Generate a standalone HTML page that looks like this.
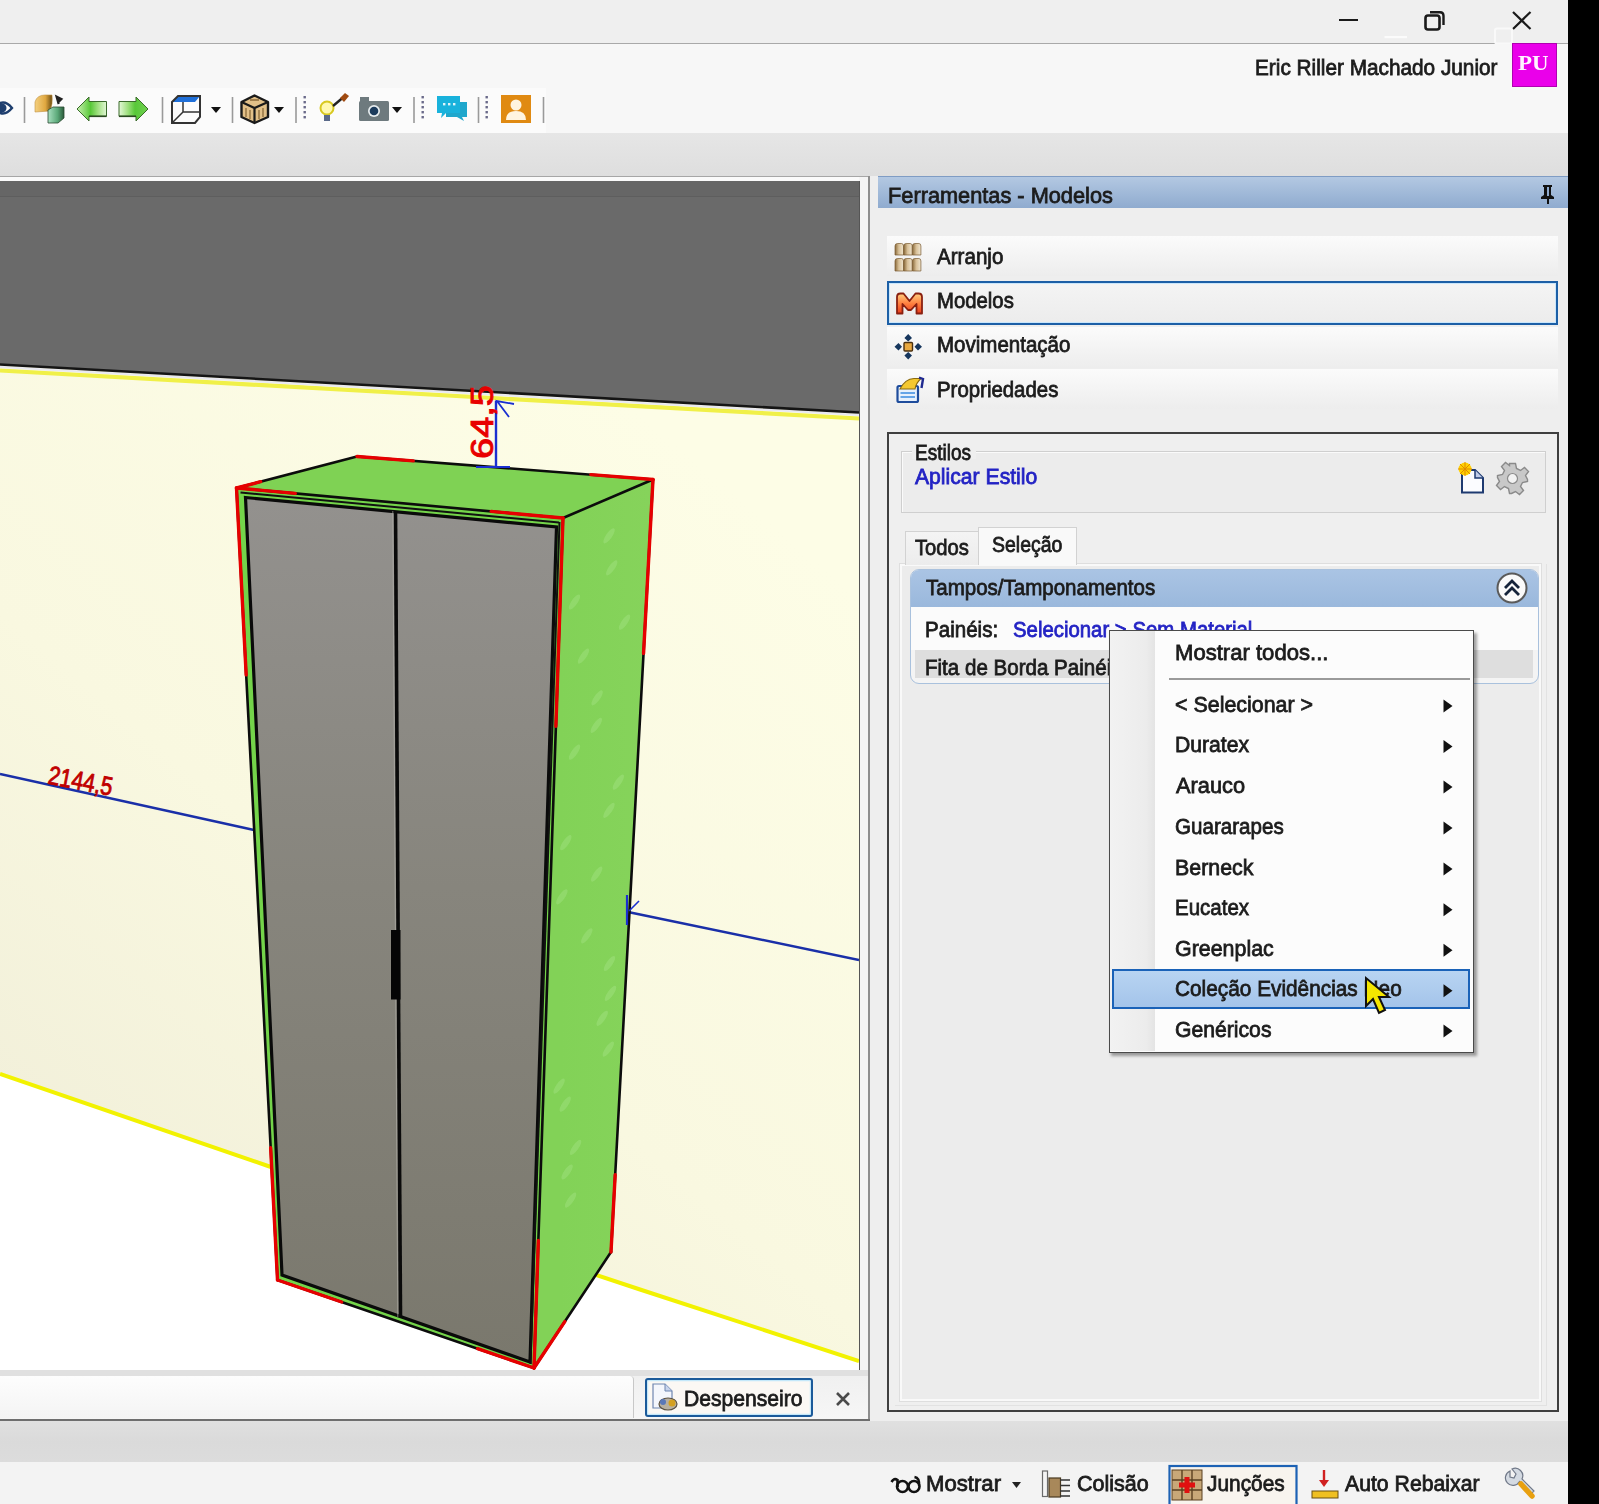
<!DOCTYPE html><html><head><meta charset="utf-8"><title>Promob</title><style>
*{margin:0;padding:0;box-sizing:border-box}
html,body{width:1599px;height:1504px;overflow:hidden;background:#f0f0f0;position:relative;font-family:"Liberation Sans",sans-serif}
.a{position:absolute}
.t{position:absolute;white-space:nowrap;line-height:1;transform-origin:0 0;font-family:"Liberation Sans",sans-serif;-webkit-text-stroke:0.8px currentColor}
</style></head><body>
<div class="a" style="left:0;top:0;width:1568px;height:43px;background:#efefef"></div>
<div class="a" style="left:0;top:43px;width:1568px;height:1px;background:#a9a9a9"></div>
<div class="a" style="left:0;top:44px;width:1568px;height:89px;background:#f7f7f7"></div>
<div class="a" style="left:0;top:88px;width:546px;height:45px;background:#fbfbfb"></div>
<svg class="a" style="left:1330px;top:5px" width="210" height="39" viewBox="1330 5 210 39">
<line x1="1339" y1="20" x2="1358" y2="20" stroke="#1a1a1a" stroke-width="2"/>
<rect x="1425.5" y="15.5" width="14" height="14" rx="2.5" fill="none" stroke="#1a1a1a" stroke-width="2.6"/>
<path d="M1430,12.3 L1440,12.3 Q1443.5,12.3 1443.5,15.8 L1443.5,25" fill="none" stroke="#1a1a1a" stroke-width="2.4"/>
<path d="M1513,12 L1530.5,29 M1530.5,12 L1513,29" stroke="#1a1a1a" stroke-width="2.2"/>
<rect x="1384.5" y="36" width="22.5" height="2.2" fill="#fbfbfb"/>
<rect x="1495" y="28.5" width="17" height="15" rx="2" fill="none" stroke="#f9f9f9" stroke-width="2"/>
</svg>
<div class="a" style="left:1512px;top:43px;width:45px;height:44px;background:#ea00ea;border:1px solid #b000b0"></div>
<div class="t" style="left:1518px;top:52.6px;font-family:'Liberation Serif',serif;font-weight:bold;font-size:20.5px;color:#fff5ff;-webkit-text-stroke:0;transform:scaleX(1.12)">PU</div>
<svg width="560" height="50" viewBox="0 85 560 50" style="position:absolute;left:0;top:85px">
<line x1="24.5" y1="97" x2="24.5" y2="123" stroke="#9a9a9a" stroke-width="1.6"/>
<line x1="162.5" y1="97" x2="162.5" y2="123" stroke="#9a9a9a" stroke-width="1.6"/>
<line x1="232.5" y1="97" x2="232.5" y2="123" stroke="#9a9a9a" stroke-width="1.6"/>
<line x1="296" y1="97" x2="296" y2="123" stroke="#9a9a9a" stroke-width="1.6"/>
<line x1="414" y1="97" x2="414" y2="123" stroke="#9a9a9a" stroke-width="1.6"/>
<line x1="478.5" y1="97" x2="478.5" y2="123" stroke="#9a9a9a" stroke-width="1.6"/>
<line x1="543.5" y1="97" x2="543.5" y2="123" stroke="#9a9a9a" stroke-width="1.6"/>
<rect x="303.5" y="96" width="2.4" height="2.4" fill="#6a6a8a"/>
<rect x="303.5" y="101" width="2.4" height="2.4" fill="#6a6a8a"/>
<rect x="303.5" y="106" width="2.4" height="2.4" fill="#6a6a8a"/>
<rect x="303.5" y="111" width="2.4" height="2.4" fill="#6a6a8a"/>
<rect x="303.5" y="116" width="2.4" height="2.4" fill="#6a6a8a"/>
<rect x="421.5" y="96" width="2.4" height="2.4" fill="#6a6a8a"/>
<rect x="421.5" y="101" width="2.4" height="2.4" fill="#6a6a8a"/>
<rect x="421.5" y="106" width="2.4" height="2.4" fill="#6a6a8a"/>
<rect x="421.5" y="111" width="2.4" height="2.4" fill="#6a6a8a"/>
<rect x="421.5" y="116" width="2.4" height="2.4" fill="#6a6a8a"/>
<rect x="485.5" y="96" width="2.4" height="2.4" fill="#6a6a8a"/>
<rect x="485.5" y="101" width="2.4" height="2.4" fill="#6a6a8a"/>
<rect x="485.5" y="106" width="2.4" height="2.4" fill="#6a6a8a"/>
<rect x="485.5" y="111" width="2.4" height="2.4" fill="#6a6a8a"/>
<rect x="485.5" y="116" width="2.4" height="2.4" fill="#6a6a8a"/>
<path d="M-6,108 Q3,97 12,108 Q3,119 -6,108 Z" fill="#ffffff" stroke="#1e3e6e" stroke-width="2.4"/>
<circle cx="2" cy="108" r="4.5" fill="#1e3e6e"/>
<defs><linearGradient id="lag" x1="77" y1="0" x2="107" y2="0" gradientUnits="userSpaceOnUse"><stop offset="0" stop-color="#c8f0b0"/><stop offset="0.45" stop-color="#58c838"/><stop offset="0.7" stop-color="#a0e080"/><stop offset="1" stop-color="#e4f8d8"/></linearGradient><linearGradient id="rag" x1="119" y1="0" x2="148" y2="0" gradientUnits="userSpaceOnUse"><stop offset="0" stop-color="#e4f8d8"/><stop offset="0.3" stop-color="#a0e080"/><stop offset="0.55" stop-color="#58c838"/><stop offset="1" stop-color="#70d050"/></linearGradient><linearGradient id="obg" x1="0" y1="0" x2="1" y2="0"><stop offset="0" stop-color="#f4d080"/><stop offset="0.6" stop-color="#e0a840"/><stop offset="1" stop-color="#6a4a10"/></linearGradient><linearGradient id="gbg" x1="0" y1="0" x2="1" y2="0"><stop offset="0" stop-color="#a8e0c0"/><stop offset="0.6" stop-color="#5aa878"/><stop offset="1" stop-color="#2a5a3a"/></linearGradient></defs>
<path d="M35,102 Q37,95 45,95 L52,95 Q53,104 50,111 L35,112 Z" fill="url(#obg)" stroke="#c09040" stroke-width="0.6"/>
<path d="M48,110 L53,107 L64,107 L64,118 L58,123 L48,123 Z" fill="url(#gbg)" stroke="#2a4a30" stroke-width="0.8"/>
<path d="M56,96 L62,99 L58,103 Z M57,98 L59,104" fill="#222" stroke="#222" stroke-width="1.5"/>
<path d="M77,109 L89,97 L89,101.5 L106.5,101.5 L106.5,116.3 L89,116.3 L89,121 Z" fill="url(#lag)" stroke="#3a6a2a" stroke-width="1"/>
<path d="M89,116.3 L106.5,116.3" stroke="#2a4a20" stroke-width="1.6"/>
<path d="M148,109 L136,97 L136,101.5 L119,101.5 L119,116.3 L136,116.3 L136,121 Z" fill="url(#rag)" stroke="#3a6a2a" stroke-width="1"/>
<path d="M119,116.3 L136,116.3" stroke="#2a4a20" stroke-width="1.6"/>
<path d="M178,96 L200,96 L195,102 L172,102 Z" fill="#1f6fd8"/>
<path d="M172,102 L178,96 L200,96 L200,117 L195,123 L172,123 Z" fill="none" stroke="#333" stroke-width="2"/>
<path d="M183,102 L183,112 L200,112 M183,112 L173,122" fill="none" stroke="#333" stroke-width="1.5"/>
<path d="M211,107 L221,107 L216,113 Z" fill="#111"/>
<path d="M274,107 L284,107 L279,113 Z" fill="#111"/>
<path d="M392,107 L402,107 L397,113 Z" fill="#111"/>
<path d="M241.5,102 L254.5,95.5 L268,102 L268,117 L254.5,123 L241.5,117 Z" fill="#e2c088" stroke="#1a1a1a" stroke-width="2.4" stroke-linejoin="round"/>
<path d="M241.5,102 L254.5,108 L268,102 M254.5,108 L254.5,123" fill="none" stroke="#1a1a1a" stroke-width="2.2"/>
<path d="M246,108 L246,117 M250,110 L250,119 M259,110 L259,119 M263,108 L263,117 M250,100 L259,100" stroke="#8a6a3a" stroke-width="1.3"/>
<circle cx="327" cy="108" r="6.5" fill="#fff8b0" stroke="#d8c820" stroke-width="2"/>
<rect x="324" y="115" width="6" height="6" fill="#5a6a8a"/>
<path d="M333,106 L346,95" stroke="#222" stroke-width="2.4"/><path d="M340,98 L345,93 L349,96 L344,102 Z" fill="#a04a10"/>
<rect x="359" y="101" width="30" height="20" rx="1.5" fill="#6e7a7e"/><rect x="360" y="97" width="9" height="5" fill="#6e7a7e"/>
<circle cx="374" cy="111" r="6" fill="#e8eef0"/><circle cx="374" cy="111" r="4.3" fill="#1b3b5c"/>
<path d="M446,102 L467,102 L467,117 L462,117 L464,121 L457,117 L446,117 Z" fill="#1fa7cc"/>
<path d="M437,96 L460,96 L460,113 L446,113 L441,118 L442,113 L437,113 Z" fill="#19b2dc"/>
<rect x="443" y="103" width="2.4" height="2.4" fill="#e0f4fa"/>
<rect x="448" y="103" width="2.4" height="2.4" fill="#e0f4fa"/>
<rect x="453" y="103" width="2.4" height="2.4" fill="#e0f4fa"/>
<rect x="501" y="95" width="30" height="28" fill="#e08a12"/>
<circle cx="516" cy="105" r="5.5" fill="#fff4e0"/><path d="M506,120 Q506,111 516,111 Q526,111 526,120 Z" fill="#fff4e0"/>
</svg>
<div class="a" style="left:0;top:133px;width:1568px;height:43px;background:linear-gradient(#e6e6e6,#dedede)"></div>
<div class="a" style="left:0;top:176px;width:870px;height:1px;background:#a6a6a6"></div>
<div class="a" style="left:0;top:177px;width:869px;height:4px;background:#fafafa"></div>
<div class="a" style="left:859px;top:177px;width:10px;height:1243px;background:#f4f4f4"></div>
<div class="a" style="left:868px;top:176px;width:2px;height:1244px;background:#8e8e8e"></div>
<svg width="859" height="1189" viewBox="0 181 859 1189" style="position:absolute;left:0;top:181px;display:block">
<defs>
<linearGradient id="wallg" x1="600" y1="380" x2="0" y2="1100" gradientUnits="userSpaceOnUse"><stop offset="0" stop-color="#fdfde6"/><stop offset="0.6" stop-color="#f9f8e0"/><stop offset="1" stop-color="#f2f0da"/></linearGradient>
<linearGradient id="doorg" x1="0" y1="500" x2="0" y2="1360" gradientUnits="userSpaceOnUse"><stop offset="0" stop-color="#93918e"/><stop offset="0.45" stop-color="#87857d"/><stop offset="1" stop-color="#7a786d"/></linearGradient>
<linearGradient id="rightg" x1="560" y1="0" x2="650" y2="0" gradientUnits="userSpaceOnUse"><stop offset="0" stop-color="#82d257"/><stop offset="1" stop-color="#86d35b"/></linearGradient>
</defs>
<rect x="0" y="181" width="859" height="1189" fill="#6a6a6a"/>
<rect x="0" y="181" width="859" height="16" fill="#666666"/><rect x="0" y="196" width="859" height="1" fill="#5e5e5e"/>
<polygon points="0,364 859,412 859,1361 640,1289.5 268,1166 0,1074" fill="url(#wallg)"/>
<polygon points="0,1074 268,1166 640,1289.5 859,1361 859,1370 0,1370" fill="#ffffff"/>
<line x1="0" y1="370.5" x2="859" y2="418.5" stroke="#f0f048" stroke-width="4.2"/>
<line x1="0" y1="367" x2="859" y2="415" stroke="#e8e8f0" stroke-width="2"/>
<line x1="0" y1="364.5" x2="859" y2="412.5" stroke="#151515" stroke-width="2.6"/>
<polyline points="0,1074 268,1166 640,1289.5 859,1361" fill="none" stroke="#f2f200" stroke-width="4"/>
<line x1="0" y1="774" x2="254" y2="830" stroke="#1a2fa8" stroke-width="2.4"/>
<line x1="628" y1="912" x2="859" y2="960" stroke="#1a2fa8" stroke-width="2.4"/>
<polygon points="563,518 653,479.5 611,1252 534,1368" fill="url(#rightg)"/>
<polygon points="236.5,488 357,456.5 653,479.5 563,518" fill="#7fd254"/>
<ellipse cx="609.1" cy="535.8" rx="3" ry="9" transform="rotate(35 609.1 535.8)" fill="#b4eb98" opacity="0.3"/>
<ellipse cx="611.7" cy="567.9" rx="3" ry="9" transform="rotate(35 611.7 567.9)" fill="#b4eb98" opacity="0.3"/>
<ellipse cx="574.5" cy="602.0" rx="3" ry="9" transform="rotate(35 574.5 602.0)" fill="#b4eb98" opacity="0.3"/>
<ellipse cx="624.5" cy="622.2" rx="3" ry="9" transform="rotate(35 624.5 622.2)" fill="#b4eb98" opacity="0.3"/>
<ellipse cx="583.5" cy="656.1" rx="3" ry="9" transform="rotate(35 583.5 656.1)" fill="#b4eb98" opacity="0.3"/>
<ellipse cx="597.1" cy="697.9" rx="3" ry="9" transform="rotate(35 597.1 697.9)" fill="#b4eb98" opacity="0.3"/>
<ellipse cx="596.3" cy="725.4" rx="3" ry="9" transform="rotate(35 596.3 725.4)" fill="#b4eb98" opacity="0.3"/>
<ellipse cx="574.5" cy="752.2" rx="3" ry="9" transform="rotate(35 574.5 752.2)" fill="#b4eb98" opacity="0.3"/>
<ellipse cx="618.3" cy="782.2" rx="3" ry="9" transform="rotate(35 618.3 782.2)" fill="#b4eb98" opacity="0.3"/>
<ellipse cx="609.0" cy="810.4" rx="3" ry="9" transform="rotate(35 609.0 810.4)" fill="#b4eb98" opacity="0.3"/>
<ellipse cx="565.8" cy="842.7" rx="3" ry="9" transform="rotate(35 565.8 842.7)" fill="#b4eb98" opacity="0.3"/>
<ellipse cx="596.7" cy="874.1" rx="3" ry="9" transform="rotate(35 596.7 874.1)" fill="#b4eb98" opacity="0.3"/>
<ellipse cx="561.9" cy="896.8" rx="3" ry="9" transform="rotate(35 561.9 896.8)" fill="#b4eb98" opacity="0.3"/>
<ellipse cx="586.8" cy="935.8" rx="3" ry="9" transform="rotate(35 586.8 935.8)" fill="#b4eb98" opacity="0.3"/>
<ellipse cx="609.5" cy="963.5" rx="3" ry="9" transform="rotate(35 609.5 963.5)" fill="#b4eb98" opacity="0.3"/>
<ellipse cx="610.5" cy="993.4" rx="3" ry="9" transform="rotate(35 610.5 993.4)" fill="#b4eb98" opacity="0.3"/>
<ellipse cx="602.2" cy="1018.3" rx="3" ry="9" transform="rotate(35 602.2 1018.3)" fill="#b4eb98" opacity="0.3"/>
<ellipse cx="608.3" cy="1049.1" rx="3" ry="9" transform="rotate(35 608.3 1049.1)" fill="#b4eb98" opacity="0.3"/>
<ellipse cx="559.1" cy="1086.1" rx="3" ry="9" transform="rotate(35 559.1 1086.1)" fill="#b4eb98" opacity="0.3"/>
<ellipse cx="565.2" cy="1104.2" rx="3" ry="9" transform="rotate(35 565.2 1104.2)" fill="#b4eb98" opacity="0.3"/>
<ellipse cx="575.6" cy="1147.4" rx="3" ry="9" transform="rotate(35 575.6 1147.4)" fill="#b4eb98" opacity="0.3"/>
<ellipse cx="567.1" cy="1172.0" rx="3" ry="9" transform="rotate(35 567.1 1172.0)" fill="#b4eb98" opacity="0.3"/>
<ellipse cx="570.6" cy="1200.1" rx="3" ry="9" transform="rotate(35 570.6 1200.1)" fill="#b4eb98" opacity="0.3"/>
<polygon points="236.5,488 563,518 534,1368 277.5,1280" fill="#74d44a"/>
<polygon points="245.5,497.5 556.5,527 530,1362 282,1275" fill="url(#doorg)" stroke="#0a0a0a" stroke-width="3.2" stroke-linejoin="miter"/>
<line x1="240.5" y1="492.5" x2="559" y2="522.5" stroke="#111" stroke-width="2"/>
<line x1="395.5" y1="511" x2="400.5" y2="1317" stroke="#0a0a0a" stroke-width="3.6"/>
<line x1="392.8" y1="511" x2="397.8" y2="1317" stroke="#b8b6b0" stroke-width="1" opacity="0.6"/>
<rect x="391" y="930" width="9.5" height="69.5" fill="#050505"/>
<line x1="559.5" y1="522" x2="530.5" y2="1364" stroke="#111" stroke-width="2"/>
<line x1="236.5" y1="488" x2="357" y2="456.5" stroke="#0c0c0c" stroke-width="2.6" stroke-linecap="round"/>
<line x1="357" y1="456.5" x2="653" y2="479.5" stroke="#0c0c0c" stroke-width="2.6" stroke-linecap="round"/>
<line x1="653" y1="479.5" x2="563" y2="518" stroke="#0c0c0c" stroke-width="2.6" stroke-linecap="round"/>
<line x1="236.5" y1="488" x2="563" y2="518" stroke="#0c0c0c" stroke-width="2.6" stroke-linecap="round"/>
<line x1="563" y1="518" x2="534" y2="1368" stroke="#0c0c0c" stroke-width="2.6" stroke-linecap="round"/>
<line x1="277.5" y1="1280" x2="534" y2="1368" stroke="#0c0c0c" stroke-width="2.6" stroke-linecap="round"/>
<line x1="653" y1="479.5" x2="611" y2="1252" stroke="#0c0c0c" stroke-width="2.6" stroke-linecap="round"/>
<line x1="611" y1="1252" x2="534" y2="1368" stroke="#0c0c0c" stroke-width="2.6" stroke-linecap="round"/>
<line x1="236.5" y1="488" x2="277.5" y2="1280" stroke="#0c0c0c" stroke-width="2.6" stroke-linecap="round"/>
<line x1="236.5" y1="488" x2="246.176" y2="674.912" stroke="#e60000" stroke-width="3.4" stroke-linecap="round"/>
<line x1="270.653" y1="1147.7359999999999" x2="277.5" y2="1280" stroke="#e60000" stroke-width="3.4" stroke-linecap="round"/>
<line x1="236.5" y1="488.0" x2="260.6" y2="481.7" stroke="#e60000" stroke-width="3.4" stroke-linecap="round"/>
<line x1="357" y1="456.5" x2="413.24" y2="460.87" stroke="#e60000" stroke-width="3.4" stroke-linecap="round"/>
<line x1="590.84" y1="474.67" x2="653" y2="479.5" stroke="#e60000" stroke-width="3.4" stroke-linecap="round"/>
<line x1="236.5" y1="488" x2="295.27" y2="493.4" stroke="#e60000" stroke-width="3.4" stroke-linecap="round"/>
<line x1="491.17" y1="511.4" x2="563.0" y2="518" stroke="#e60000" stroke-width="3.4" stroke-linecap="round"/>
<line x1="653" y1="479.5" x2="643.55" y2="653.3125" stroke="#e60000" stroke-width="3.4" stroke-linecap="round"/>
<line x1="615.2" y1="1174.75" x2="611" y2="1252.0" stroke="#e60000" stroke-width="3.4" stroke-linecap="round"/>
<line x1="564.8" y1="1321.6" x2="534" y2="1368" stroke="#e60000" stroke-width="3.4" stroke-linecap="round"/>
<line x1="563" y1="518" x2="555.895" y2="726.25" stroke="#e60000" stroke-width="3.4" stroke-linecap="round"/>
<line x1="538.35" y1="1240.5" x2="534" y2="1368" stroke="#e60000" stroke-width="3.4" stroke-linecap="round"/>
<line x1="277.5" y1="1280" x2="341.625" y2="1302.0" stroke="#e60000" stroke-width="3.4" stroke-linecap="round"/>
<line x1="477.57" y1="1348.64" x2="534.0" y2="1368" stroke="#e60000" stroke-width="3.4" stroke-linecap="round"/>
<line x1="496" y1="401" x2="496" y2="468" stroke="#1a2fd0" stroke-width="2.4"/>
<polyline points="514,404 497,401 509,417" fill="none" stroke="#1a2fd0" stroke-width="1.8"/>
<line x1="476" y1="467" x2="510" y2="467" stroke="#1a2fd0" stroke-width="2"/>
<text x="0" y="0" transform="translate(493,459) rotate(-90)" font-family="Liberation Sans" font-size="31" fill="#e80000" stroke="#e80000" stroke-width="0.9" textLength="74" lengthAdjust="spacingAndGlyphs">64,5</text>
<text x="0" y="0" transform="translate(47,783.5) rotate(10.8)" font-family="Liberation Sans" font-size="26" fill="#c00000" stroke="#c00000" stroke-width="0.9" textLength="65" lengthAdjust="spacingAndGlyphs">2144,5</text>
<line x1="627" y1="895" x2="627" y2="925" stroke="#1a2fd0" stroke-width="2.2"/>
<polyline points="639,901 629,911" fill="none" stroke="#1a2fd0" stroke-width="1.6"/>
</svg>
<div class="a" style="left:858.5px;top:181px;width:1px;height:1189px;background:#555"></div>
<div class="a" style="left:0;top:1370px;width:868px;height:49px;background:linear-gradient(#e0e0e0 0,#e0e0e0 6px,#f0f0f0 6px,#f6f6f6 100%)"></div>
<div class="a" style="left:0;top:1376px;width:634px;height:42px;background:linear-gradient(#fdfdfd,#f4f4f4);border-right:1px solid #c8c8c8;border-radius:0 4px 0 0"></div>
<div class="a" style="left:645px;top:1378px;width:168px;height:39px;border:2.4px solid #1b5a9a;border-radius:3px;background:#fbf8f4;box-shadow:inset 0 0 0 1.2px #c4e8fa"></div>
<div class="a" style="left:0;top:1419px;width:870px;height:2px;background:#6e6e6e"></div>
<svg class="a" style="left:650px;top:1382px" width="30" height="32" viewBox="650 1382 30 32">
<path d="M653,1384 L665,1384 L672,1391 L672,1408 L653,1408 Z" fill="#f4f6fc" stroke="#6f86b0" stroke-width="1.2"/>
<path d="M665,1384 L665,1391 L672,1391" fill="#c8d4ec" stroke="#6f86b0" stroke-width="1"/>
<ellipse cx="668" cy="1404" rx="9" ry="6" fill="#b8b0a0" stroke="#5a5040" stroke-width="1.2"/>
<circle cx="672" cy="1403" r="3.5" fill="#d4a020"/><circle cx="663" cy="1402" r="3" fill="#5a78b8"/>
</svg>
<svg class="a" style="left:834px;top:1390px" width="18" height="18" viewBox="0 0 18 18"><path d="M3,3 L15,15 M15,3 L3,15" stroke="#4a4a4a" stroke-width="2.6"/></svg>
<div class="a" style="left:0;top:1421px;width:1568px;height:41px;background:linear-gradient(#e0e0e0,#dadada 50%,#dcdcdc)"></div>
<div class="a" style="left:0;top:1462px;width:1568px;height:42px;background:#f3f3f3"></div>
<div class="a" style="left:870px;top:176px;width:698px;height:1245px;background:#eeeeee"></div>
<div class="a" style="left:877.5px;top:176px;width:690.5px;height:32px;background:linear-gradient(#b3c8e2,#8fabcf);border-top:1px solid #7f9cc4"></div>
<svg class="a" style="left:1538px;top:183px" width="20" height="22" viewBox="0 0 20 22"><path d="M5,2 L14,2 L14,4 L13,4 L13,12 L16,14 L16,16 L11,16 L11,21 L9,21 L9,16 L3,16 L3,14 L6,12 L6,4 L5,4 Z" fill="#111"/><rect x="9" y="4" width="2" height="9" fill="#8fabcf"/></svg>
<div class="a" style="left:887px;top:236px;width:671px;height:40px;background:linear-gradient(#fbfbfb,#ededed)"></div>
<div class="a" style="left:887px;top:281px;width:671px;height:44px;background:linear-gradient(#f4f4f4,#ececec);border:2.4px solid #1c5fa6;box-shadow:inset 0 0 0 1px #c9e6fb"></div>
<div class="a" style="left:887px;top:327px;width:671px;height:41px;background:linear-gradient(#fbfbfb,#ededed)"></div>
<div class="a" style="left:887px;top:369px;width:671px;height:40px;background:linear-gradient(#fbfbfb,#ededed)"></div>
<svg class="a" style="left:890px;top:240px" width="40" height="170" viewBox="890 240 40 170">
<defs>
<linearGradient id="arrg" x1="0" y1="0" x2="1" y2="0"><stop offset="0" stop-color="#8a6a3a"/><stop offset="0.45" stop-color="#d8c098"/><stop offset="1" stop-color="#f0e6d0"/></linearGradient>
<linearGradient id="mg" x1="0" y1="0" x2="0" y2="1"><stop offset="0" stop-color="#ffd080"/><stop offset="0.5" stop-color="#ff8040"/><stop offset="1" stop-color="#e83a1a"/></linearGradient>
</defs>
<g fill="url(#arrg)" stroke="#7a5a30" stroke-width="0.7">
<path d="M895,255 L895,246 Q895,243.5 897.5,243.5 L901.5,243.5 Q903.5,243.5 903.5,246 L903.5,255 Z"/><path d="M903.7,255 L903.7,246 Q903.7,243.5 906.2,243.5 L910.2,243.5 Q912.2,243.5 912.2,246 L912.2,255 Z"/><path d="M912.4,255 L912.4,246 Q912.4,243.5 914.9,243.5 L918.9,243.5 Q920.9,243.5 920.9,246 L920.9,255 Z"/>
<path d="M895,271 L895,261 Q895,258.5 897.5,258.5 L901.5,258.5 Q903.5,258.5 903.5,261 L903.5,271 Z"/><path d="M903.7,271 L903.7,261 Q903.7,258.5 906.2,258.5 L910.2,258.5 Q912.2,258.5 912.2,261 L912.2,271 Z"/><path d="M912.4,271 L912.4,261 Q912.4,258.5 914.9,258.5 L918.9,258.5 Q920.9,258.5 920.9,261 L920.9,271 Z"/>
</g>
<path d="M897,313.5 L897,297 Q897,293.5 900.5,293.5 L903.5,293.5 L909.5,301 L915.5,293.5 L918.5,293.5 Q922,293.5 922,297 L922,313.5 L916.5,313.5 L916.5,304 L911,310 L908,310 L902.5,304 L902.5,313.5 Z" fill="url(#mg)" stroke="#8a2010" stroke-width="1.8" stroke-linejoin="round"/>
<rect x="904" y="342.5" width="8.5" height="8.5" rx="1" fill="#e8a840" stroke="#4a3010" stroke-width="1.4"/>
<path d="M908.2,334 L912,338 L908.2,341.5 L904.4,338 Z M908.2,352 L912,355.5 L908.2,359.5 L904.4,355.5 Z M894.5,346.8 L898.5,343 L902,346.8 L898.5,350.5 Z M914.5,346.8 L918,343 L922,346.8 L918,350.5 Z" fill="#17375e"/>
<rect x="897.5" y="386" width="20.5" height="16" rx="1.5" fill="#e6f0fc" stroke="#1e4c9c" stroke-width="2.2"/>
<path d="M900.5,393 L915,393 M900.5,397 L915,397" stroke="#3a8ae0" stroke-width="1.6"/>
<path d="M900,389 Q905,379 914,378.5 L921,378.5 Q916,383 915,389 Z" fill="#f4c830" stroke="#8a6a10" stroke-width="1.1"/>
<path d="M919,377.5 L923,379 L921.5,388" stroke="#202a90" stroke-width="2.4" fill="none"/>
</svg>
<div class="a" style="left:887px;top:432px;width:672px;height:980px;border:2px solid #3f3f3f;background:#efefef"></div>
<div class="a" style="left:901px;top:451px;width:645px;height:62px;border:1.5px solid #cfcfcf;box-shadow:inset 1px 1px 0 #fafafa;background:#ececec"></div>
<div class="a" style="left:912px;top:445px;width:64px;height:14px;background:#efefef"></div>
<svg class="a" style="left:1452px;top:459px" width="80" height="38" viewBox="1452 459 80 38">
<path d="M1462,470 L1475,470 L1483,478 L1483,492.5 L1462,492.5 Z" fill="#fbfcff" stroke="#1e3a70" stroke-width="2"/>
<path d="M1475,470 L1475,478 L1483,478" fill="#c0cce8" stroke="#1e3a70" stroke-width="1.5"/>
<circle cx="1465" cy="469" r="6.5" fill="#ffd000"/>
<g stroke="#e08a00" stroke-width="1"><path d="M1465,462 L1465,476 M1458,469 L1472,469 M1460,464 L1470,474 M1470,464 L1460,474"/></g>
<g transform="translate(1512.5,478.5)"><path d="M-3,-15 L3,-15 L4,-10 L8,-8 L12,-11 L16,-7 L13,-3 L15,1 L15,3 L10,4 L8,8 L11,12 L7,16 L3,13 L-1,15 L-3,15 L-4,10 L-8,8 L-12,11 L-16,7 L-13,3 L-15,-1 L-15,-3 L-10,-4 L-8,-8 L-11,-12 L-7,-16 L-3,-13 Z" fill="#c8c8c8" stroke="#8a8a8a" stroke-width="1.4"/><circle r="5" fill="#f2f2f2" stroke="#8a8a8a" stroke-width="1.2"/></g>
</svg>
<div class="a" style="left:895px;top:563.5px;width:652px;height:842px;border-right:1px solid #e2e2e2;border-bottom:1px solid #e2e2e2"></div>
<div class="a" style="left:900px;top:563.5px;width:641px;height:837px;border:2.5px solid #f9f9f9;outline:1px solid #dedede;background:#ececec"></div>
<div class="a" style="left:905px;top:531px;width:74px;height:34px;border:1px solid #d2d2d2;border-bottom:none;background:linear-gradient(#f4f4f4,#ececec)"></div>
<div class="a" style="left:978px;top:527px;width:99px;height:38px;border:1px solid #d2d2d2;border-bottom:none;background:#f9f9f9"></div>
<div class="a" style="left:909.5px;top:568.5px;width:629px;height:115px;border:1.5px solid #a9c1dd;border-radius:9px;background:#f4f4f4;overflow:hidden"><div class="a" style="left:0;top:0;width:100%;height:37px;background:linear-gradient(#aac4e4,#9ab8dc)"></div><div class="a" style="left:0;top:37px;width:100%;height:43px;background:#fbfbfb"></div><div class="a" style="left:4px;top:80px;width:618px;height:28px;background:#dedede"></div></div>
<svg class="a" style="left:1494px;top:570px" width="36" height="36" viewBox="1494 570 36 36"><circle cx="1512" cy="588" r="14.5" fill="#fafafa" stroke="#5a5a5a" stroke-width="2"/><path d="M1505,588 L1512,581 L1519,588 M1505,595 L1512,588 L1519,595" fill="none" stroke="#15233a" stroke-width="2.8"/></svg>
<svg class="a" style="left:885px;top:1462px" width="660" height="42" viewBox="885 1462 660 42">
<path d="M891.5,1482 Q894,1477.5 897.5,1480 L897.5,1487" fill="none" stroke="#111" stroke-width="2.6"/>
<circle cx="902.5" cy="1486.5" r="5.5" fill="none" stroke="#111" stroke-width="2.6"/>
<circle cx="914" cy="1486.5" r="5.5" fill="none" stroke="#111" stroke-width="2.6"/>
<path d="M919,1486 Q920,1478 914.5,1477" fill="none" stroke="#111" stroke-width="2.4"/>
<path d="M1012,1482 L1021,1482 L1016.5,1488 Z" fill="#222"/>
<rect x="1042.5" y="1471" width="5" height="25.5" fill="#f4f4f4" stroke="#6a6a6a" stroke-width="1.2"/>
<rect x="1049" y="1478" width="11.5" height="19" fill="#a8885a" stroke="#4a3a20" stroke-width="1.2"/>
<path d="M1060,1480 L1070,1480 M1060,1485.5 L1070,1485.5 M1060,1491 L1070,1491 M1060,1496 L1070,1496" stroke="#333" stroke-width="1.6"/>
<rect x="1169.5" y="1466" width="127" height="40" fill="#f8f4ee" stroke="#1d62b4" stroke-width="2.2"/>
<rect x="1172" y="1470" width="30" height="30" fill="#c8a878" stroke="#5a4020" stroke-width="1"/>
<path d="M1172,1480 L1202,1480 M1172,1490 L1202,1490 M1182,1470 L1182,1500 M1192,1470 L1192,1500" stroke="#5a4020" stroke-width="1.4"/>
<path d="M1187,1477 L1187,1493 M1179,1485 L1195,1485" stroke="#e01010" stroke-width="5"/>
<path d="M1324,1470 L1324,1484" stroke="#d02020" stroke-width="2.4"/><path d="M1319,1480 L1329,1480 L1324,1487 Z" fill="#d02020"/>
<rect x="1312" y="1491" width="26" height="7" fill="#f0c020" stroke="#6a5010" stroke-width="1"/>
<path d="M1510,1471 A7.5,7.5 0 1 0 1519.5,1481.5 L1531,1494 L1534,1491 L1522,1479 A7.5,7.5 0 0 0 1512,1469 L1516,1474 L1514,1478 L1510,1477 Z" fill="#d4dae2" stroke="#707888" stroke-width="1.2"/>
<path d="M1521,1484 L1532,1496" stroke="#e8a010" stroke-width="5.5" stroke-linecap="round"/>
</svg>
<div class="t" style="left:1254.6px;top:57.4px;font-size:22.46px;color:#1c1c1c;font-weight:400;transform:scaleX(0.9253)">Eric Riller Machado Junior</div>
<div class="t" style="left:888.4px;top:183.5px;font-size:22.9px;color:#1c1c1c;font-weight:400;transform:scaleX(0.9504)">Ferramentas - Modelos</div>
<div class="t" style="left:937.0px;top:245.6px;font-size:22.61px;color:#1c1c1c;font-weight:400;transform:scaleX(0.9110)">Arranjo</div>
<div class="t" style="left:936.6px;top:290.0px;font-size:22.61px;color:#1c1c1c;font-weight:400;transform:scaleX(0.8988)">Modelos</div>
<div class="t" style="left:936.6px;top:333.9px;font-size:22.61px;color:#1c1c1c;font-weight:400;transform:scaleX(0.9075)">Movimentação</div>
<div class="t" style="left:936.6px;top:378.5px;font-size:22.61px;color:#1c1c1c;font-weight:400;transform:scaleX(0.9023)">Propriedades</div>
<div class="t" style="left:915.2px;top:442.1px;font-size:22.46px;color:#1c1c1c;font-weight:400;transform:scaleX(0.8462)">Estilos</div>
<div class="t" style="left:915.0px;top:465.8px;font-size:22.46px;color:#2323c4;font-weight:400;transform:scaleX(0.9419)">Aplicar Estilo</div>
<div class="t" style="left:915.0px;top:537.1px;font-size:22.46px;color:#1c1c1c;font-weight:400;transform:scaleX(0.9000)">Todos</div>
<div class="t" style="left:991.7px;top:533.8px;font-size:22.46px;color:#1c1c1c;font-weight:400;transform:scaleX(0.8675)">Seleção</div>
<div class="t" style="left:926.1px;top:576.0px;font-size:22.9px;color:#1c1c1c;font-weight:400;transform:scaleX(0.8961)">Tampos/Tamponamentos</div>
<div class="t" style="left:925.1px;top:618.6px;font-size:22.46px;color:#1c1c1c;font-weight:400;transform:scaleX(0.9154)">Painéis:</div>
<div class="t" style="left:1012.7px;top:618.6px;font-size:22.46px;color:#2323c4;font-weight:400;transform:scaleX(0.9069)">Selecionar &gt; Sem Material</div>
<div class="t" style="left:925.1px;top:657.4px;font-size:22.46px;color:#1c1c1c;font-weight:400;transform:scaleX(0.9154)">Fita de Borda Painéis</div>
<div class="a" style="left:1111px;top:633px;width:366px;height:423px;background:rgba(0,0,0,0.35);filter:blur(1.6px)"></div>
<div class="a" style="left:1108.5px;top:629.5px;width:365px;height:423px;border:1.5px solid #4a4a4a;background:#fcfcfc"></div>
<div class="a" style="left:1110px;top:631px;width:45px;height:420px;background:linear-gradient(90deg,#f2f2f2,#ececec 80%,#e4e4e4)"></div>
<div class="a" style="left:1169px;top:678px;width:301px;height:1.5px;background:#9a9a9a"></div>
<div class="a" style="left:1111.5px;top:969px;width:358px;height:39.5px;border:2px solid #1a62b8;background:linear-gradient(#b8d4f2,#a4c4ea)"></div>
<svg class="a" style="left:1440px;top:690px" width="16" height="360" viewBox="1440 690 16 360"><path d="M1443.5,699.5 L1452.5,706 L1443.5,712.5 Z" fill="#111"/><path d="M1443.5,740.1 L1452.5,746.6 L1443.5,753.1 Z" fill="#111"/><path d="M1443.5,780.5 L1452.5,787 L1443.5,793.5 Z" fill="#111"/><path d="M1443.5,821.5 L1452.5,828 L1443.5,834.5 Z" fill="#111"/><path d="M1443.5,862.5 L1452.5,869 L1443.5,875.5 Z" fill="#111"/><path d="M1443.5,903.3 L1452.5,909.8 L1443.5,916.3 Z" fill="#111"/><path d="M1443.5,943.8 L1452.5,950.3 L1443.5,956.8 Z" fill="#111"/><path d="M1443.5,984.3 L1452.5,990.8 L1443.5,997.3 Z" fill="#111"/><path d="M1443.5,1024.5 L1452.5,1031 L1443.5,1037.5 Z" fill="#111"/></svg>
<div class="t" style="left:1174.6px;top:642.4px;font-size:22.61px;color:#1c1c1c;font-weight:400;transform:scaleX(0.9768)">Mostrar todos...</div>
<div class="t" style="left:1174.7px;top:693.6px;font-size:22.61px;color:#1c1c1c;font-weight:400;transform:scaleX(0.9472)">&lt; Selecionar &gt;</div>
<div class="t" style="left:1174.7px;top:734.2px;font-size:22.61px;color:#1c1c1c;font-weight:400;transform:scaleX(0.9359)">Duratex</div>
<div class="t" style="left:1175.6px;top:774.8px;font-size:22.61px;color:#1c1c1c;font-weight:400;transform:scaleX(0.9634)">Arauco</div>
<div class="t" style="left:1174.7px;top:815.6px;font-size:22.61px;color:#1c1c1c;font-weight:400;transform:scaleX(0.9102)">Guararapes</div>
<div class="t" style="left:1174.7px;top:856.6px;font-size:22.61px;color:#1c1c1c;font-weight:400;transform:scaleX(0.9451)">Berneck</div>
<div class="t" style="left:1174.7px;top:897.4px;font-size:22.61px;color:#1c1c1c;font-weight:400;transform:scaleX(0.9062)">Eucatex</div>
<div class="t" style="left:1174.7px;top:937.7px;font-size:22.61px;color:#1c1c1c;font-weight:400;transform:scaleX(0.9466)">Greenplac</div>
<div class="t" style="left:1174.7px;top:978.3px;font-size:22.61px;color:#1c1c1c;font-weight:400;transform:scaleX(0.9204)">Coleção Evidências Neo</div>
<div class="t" style="left:1174.7px;top:1018.6px;font-size:22.61px;color:#1c1c1c;font-weight:400;transform:scaleX(0.9363)">Genéricos</div>
<div class="t" style="left:683.7px;top:1387.1px;font-size:22.9px;color:#1c1c1c;font-weight:400;transform:scaleX(0.9228)">Despenseiro</div>
<div class="t" style="left:926.0px;top:1473.3px;font-size:22.03px;color:#1c1c1c;font-weight:400;transform:scaleX(1.0054)">Mostrar</div>
<div class="t" style="left:1077.0px;top:1473.3px;font-size:22.03px;color:#1c1c1c;font-weight:400;transform:scaleX(0.9778)">Colisão</div>
<div class="t" style="left:1207.0px;top:1473.3px;font-size:22.03px;color:#1c1c1c;font-weight:400;transform:scaleX(0.9476)">Junções</div>
<div class="t" style="left:1344.5px;top:1473.3px;font-size:22.03px;color:#1c1c1c;font-weight:400;transform:scaleX(0.9643)">Auto Rebaixar</div>
<svg class="a" style="left:1362px;top:974px" width="36" height="46" viewBox="1362 974 36 46"><path d="M1366,978 L1366,1006 L1373,999 L1379,1013 L1385,1010 L1379,997 L1389,997 Z" fill="#f4e600" stroke="#111" stroke-width="2"/></svg>
<div class="a" style="left:1568px;top:0;width:31px;height:1504px;background:#000"></div>
</body></html>
